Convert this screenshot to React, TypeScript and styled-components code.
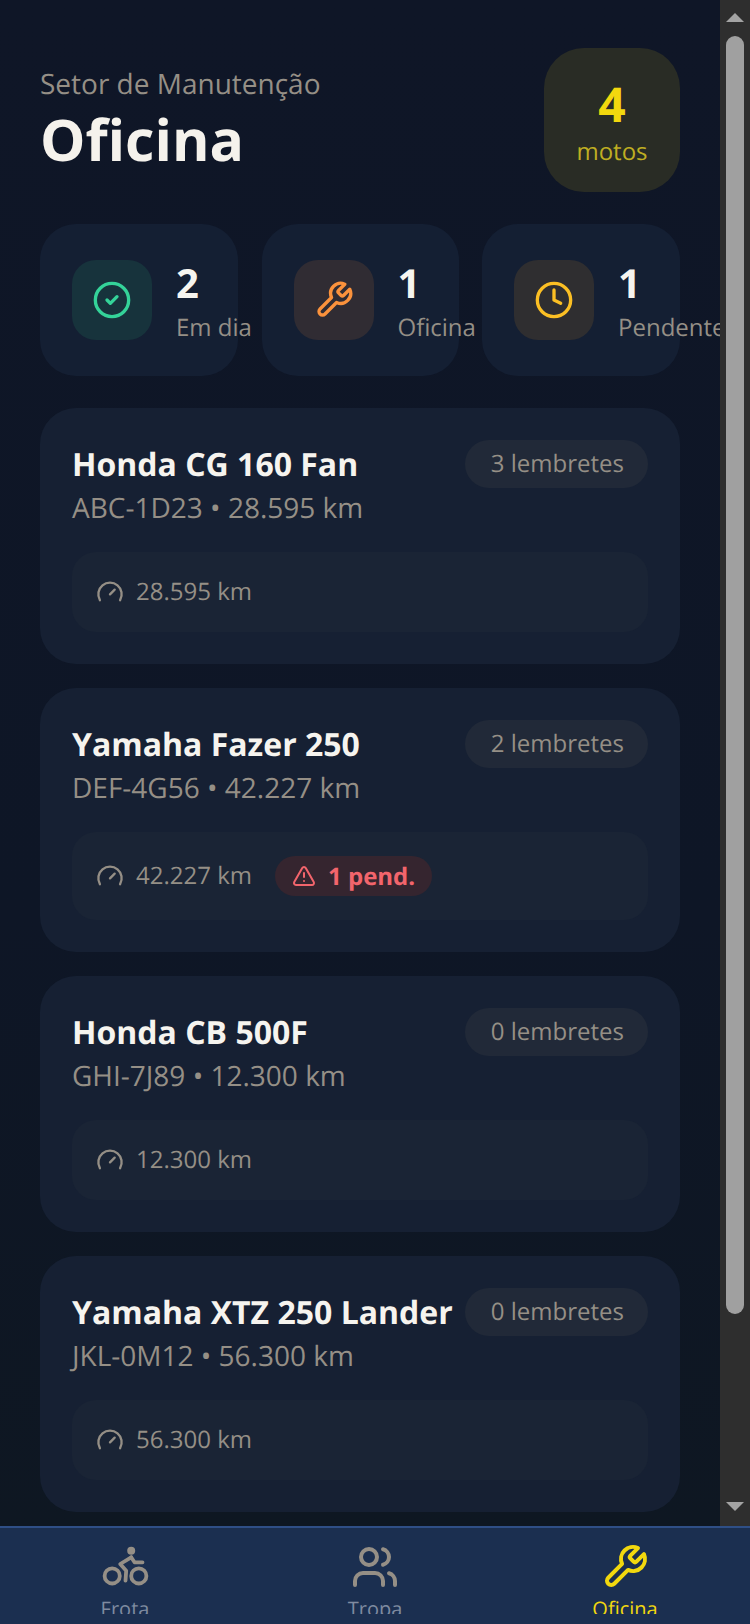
import React from 'react';
import styled, { createGlobalStyle } from 'styled-components';
import { CircleCheck, Clock, Gauge, TriangleAlert, Users } from 'lucide-react';

const GlobalStyle = createGlobalStyle`
  html, body { margin: 0; padding: 0; height: 100%; background: #0f1626; overflow: hidden; }
  body { font-family: "Open Sans", "Noto Sans", sans-serif; text-rendering: geometricPrecision; }
  #root { height: 100%; }
  * { box-sizing: border-box; }
`;

const Screen = styled.div`
  display: flex;
  flex-direction: column;
  width: 750px;
  height: 1624px;
`;

const Body = styled.div`
  flex: 1;
  min-height: 0;
  display: flex;
`;

const Scroller = styled.main`
  flex: 1;
  min-width: 0;
  overflow: hidden;
  background: linear-gradient(180deg, #0f1627 0%, #0e1626 60%, #0e1722 100%);
`;

// headless browser hides real scrollbars, so this one is drawn
const ScrollTrack = styled.div`
  flex: none;
  display: flex;
  flex-direction: column;
  align-items: center;
  width: 30px;
  padding: 13px 0 15px;
  background: #2e2e2e;
`;

const ScrollArrow = styled.div<{ $down?: boolean }>`
  width: 0;
  height: 0;
  border-left: 9px solid transparent;
  border-right: 9px solid transparent;
  ${(p) => (p.$down ? 'margin-top: auto; border-top: 9px solid #a3a3a3;' : 'border-bottom: 9px solid #a3a3a3;')}
`;

const ScrollThumb = styled.div`
  width: 18px;
  height: 1278px;
  margin-top: 14px;
  border-radius: 9px;
  background: #a0a0a0;
`;

const Content = styled.div`
  display: flex;
  flex-direction: column;
  gap: 24px;
  padding: 48px 40px 24px;
`;

const Header = styled.header`
  display: flex;
  justify-content: space-between;
  align-items: center;
  margin-bottom: 8px;
`;

const Eyebrow = styled.div`
  margin-top: -2px;
  font-size: 28px;
  line-height: 38px;
  color: #958f86;
`;

const Title = styled.h1`
  margin: 1px 0 0;
  font-size: 57.2px;
  line-height: 70px;
  font-weight: 700;
  color: #f5f2ec;
`;

const CountBadge = styled.div`
  display: flex;
  flex-direction: column;
  align-items: center;
  justify-content: center;
  width: 136px;
  height: 144px;
  border-radius: 40px;
  background: #292c25;
`;

const CountValue = styled.div`
  font-size: 48px;
  line-height: 66px;
  font-weight: 700;
  color: #f2d80e;
`;

const CountLabel = styled.div`
  margin-top: -2px;
  font-size: 24px;
  line-height: 32px;
  color: #bfae22;
`;

const Stats = styled.section`
  display: grid;
  grid-template-columns: 198px 197px 198px;
  justify-content: space-between;
  margin-bottom: 8px;
`;

const StatCard = styled.div`
  display: flex;
  gap: 24px;
  height: 152px;
  padding: 36px 32px;
  border-radius: 36px;
  background: #141f33;
  white-space: nowrap;
`;

const StatIcon = styled.div<{ $bg: string; $fg: string }>`
  flex: none;
  display: flex;
  align-items: center;
  justify-content: center;
  width: 80px;
  height: 80px;
  border-radius: 24px;
  background: ${(p) => p.$bg};
  color: ${(p) => p.$fg};
`;

const StatValue = styled.div`
  margin-top: -6px;
  font-size: 40px;
  line-height: 58px;
  font-weight: 700;
  color: #f6f4ef;
`;

const StatLabel = styled.div`
  font-size: 24px;
  line-height: 32px;
  color: #958f86;
`;

const BikeCard = styled.article`
  padding: 32px;
  border-radius: 36px;
  background: #162033;
`;

const CardTop = styled.div`
  display: flex;
  justify-content: space-between;
  align-items: flex-start;
  margin-bottom: 24px;
`;

const BikeName = styled.h2`
  margin: 0;
  padding-top: 1px;
  font-size: 32px;
  line-height: 48px;
  font-weight: 700;
  color: #f6f4ef;
  white-space: nowrap;
`;

const BikeMeta = styled.div`
  font-size: 28px;
  line-height: 38px;
  padding-bottom: 1px;
  color: #958f86;
`;

const ReminderPill = styled.div`
  flex: none;
  height: 48px;
  padding: 0 24px 0 26px;
  border-radius: 24px;
  background: #212938;
  font-size: 24px;
  line-height: 48px;
  color: #958f86;
`;

const CardFooter = styled.div`
  display: flex;
  align-items: center;
  gap: 23px;
  padding: 24px;
  border-radius: 24px;
  background: #1a2435;
`;

const Odometer = styled.div`
  display: flex;
  align-items: center;
  gap: 12px;
  font-size: 24px;
  line-height: 32px;
  color: #958f86;
`;

const PendingTag = styled.div`
  display: flex;
  align-items: center;
  gap: 12px;
  height: 40px;
  padding: 0 17px;
  border-radius: 20px;
  background: #35252f;
  color: #f2656c;
  font-size: 24px;
  font-weight: 700;
`;

const BottomNav = styled.nav`
  flex: none;
  display: grid;
  grid-template-columns: repeat(3, 1fr);
  height: 98px;
  padding-bottom: 10px;
  border-top: 2px solid #2f4f86;
  background: #1b2f50;
`;

const NavItem = styled.div<{ $active?: boolean }>`
  display: flex;
  flex-direction: column;
  align-items: center;
  gap: 6px;
  padding-top: 15px;
  overflow: hidden;
  color: ${(p) => (p.$active ? '#f2d80e' : '#958f86')};
  svg { flex: none; }
`;

const NavLabel = styled.span<{ $active?: boolean }>`
  flex: none;
  font-size: 20px;
  line-height: 24px;
  color: ${(p) => (p.$active ? '#f2d80e' : '#7f8ba0')};
`;

const BikeIcon: React.FC = () => (
  <svg width="48" height="48" viewBox="0 0 48 48" fill="none" stroke="currentColor" strokeWidth="3.8" strokeLinecap="round" strokeLinejoin="round">
    <circle cx="11.2" cy="32.9" r="7.6" />
    <circle cx="37.8" cy="32.9" r="7.6" />
    <circle cx="30.2" cy="7.7" r="4" fill="currentColor" stroke="none" />
    <path d="M30.2 14.3 19.2 21l6 6.7-.7 10" />
    <path d="M30.2 14.3 33.5 19.3h8" />
  </svg>
);

// older lucide wrench, the current package draws it differently
const WrenchIcon: React.FC<{ size: number }> = ({ size }) => (
  <svg width={size} height={size} viewBox="0 0 24 24" fill="none" stroke="currentColor" strokeWidth="2" strokeLinecap="round" strokeLinejoin="round">
    <path d="M14.7 6.3a1 1 0 0 0 0 1.4l1.6 1.6a1 1 0 0 0 1.4 0l3.77-3.77a6 6 0 0 1-7.94 7.94l-6.91 6.91a2.12 2.12 0 0 1-3-3l6.91-6.91a6 6 0 0 1 7.94-7.94l-3.76 3.76z" />
  </svg>
);

const bikes = [
  { name: 'Honda CG 160 Fan', plate: 'ABC-1D23', km: '28.595 km', reminders: 3, pending: 0 },
  { name: 'Yamaha Fazer 250', plate: 'DEF-4G56', km: '42.227 km', reminders: 2, pending: 1 },
  { name: 'Honda CB 500F', plate: 'GHI-7J89', km: '12.300 km', reminders: 0, pending: 0 },
  { name: 'Yamaha XTZ 250 Lander', plate: 'JKL-0M12', km: '56.300 km', reminders: 0, pending: 0 },
];

const App: React.FC = () => {
  return (
    <Screen>
      <GlobalStyle />
      <Body>
        <Scroller>
          <Content>
            <Header>
              <div>
                <Eyebrow>Setor de Manutenção</Eyebrow>
                <Title>Oficina</Title>
              </div>
              <CountBadge>
                <CountValue>4</CountValue>
                <CountLabel>motos</CountLabel>
              </CountBadge>
            </Header>

            <Stats>
              <StatCard>
                <StatIcon $bg="#17333c" $fg="#34d399"><CircleCheck size={40} strokeWidth={2} /></StatIcon>
                <div>
                  <StatValue>2</StatValue>
                  <StatLabel>Em dia</StatLabel>
                </div>
              </StatCard>
              <StatCard>
                <StatIcon $bg="#302c33" $fg="#fb923c"><WrenchIcon size={40} /></StatIcon>
                <div>
                  <StatValue>1</StatValue>
                  <StatLabel>Oficina</StatLabel>
                </div>
              </StatCard>
              <StatCard>
                <StatIcon $bg="#2f2e30" $fg="#fbbf24"><Clock size={40} strokeWidth={2} /></StatIcon>
                <div>
                  <StatValue>1</StatValue>
                  <StatLabel>Pendente</StatLabel>
                </div>
              </StatCard>
            </Stats>

            {bikes.map((b) => (
              <BikeCard key={b.plate}>
                <CardTop>
                  <div>
                    <BikeName>{b.name}</BikeName>
                    <BikeMeta>{b.plate} • {b.km}</BikeMeta>
                  </div>
                  <ReminderPill>{b.reminders} lembretes</ReminderPill>
                </CardTop>
                <CardFooter>
                  <Odometer>
                    <Gauge size={28} strokeWidth={2} />
                    {b.km}
                  </Odometer>
                  {b.pending > 0 && (
                    <PendingTag>
                      <TriangleAlert size={24} strokeWidth={2} />
                      {b.pending} pend.
                    </PendingTag>
                  )}
                </CardFooter>
              </BikeCard>
            ))}
          </Content>
        </Scroller>
        <ScrollTrack>
          <ScrollArrow />
          <ScrollThumb />
          <ScrollArrow $down />
        </ScrollTrack>
      </Body>
      <BottomNav>
        <NavItem>
          <BikeIcon />
          <NavLabel>Frota</NavLabel>
        </NavItem>
        <NavItem>
          <Users size={48} strokeWidth={2} />
          <NavLabel>Tropa</NavLabel>
        </NavItem>
        <NavItem $active>
          <WrenchIcon size={48} />
          <NavLabel $active>Oficina</NavLabel>
        </NavItem>
      </BottomNav>
    </Screen>
  );
};

export default App;
